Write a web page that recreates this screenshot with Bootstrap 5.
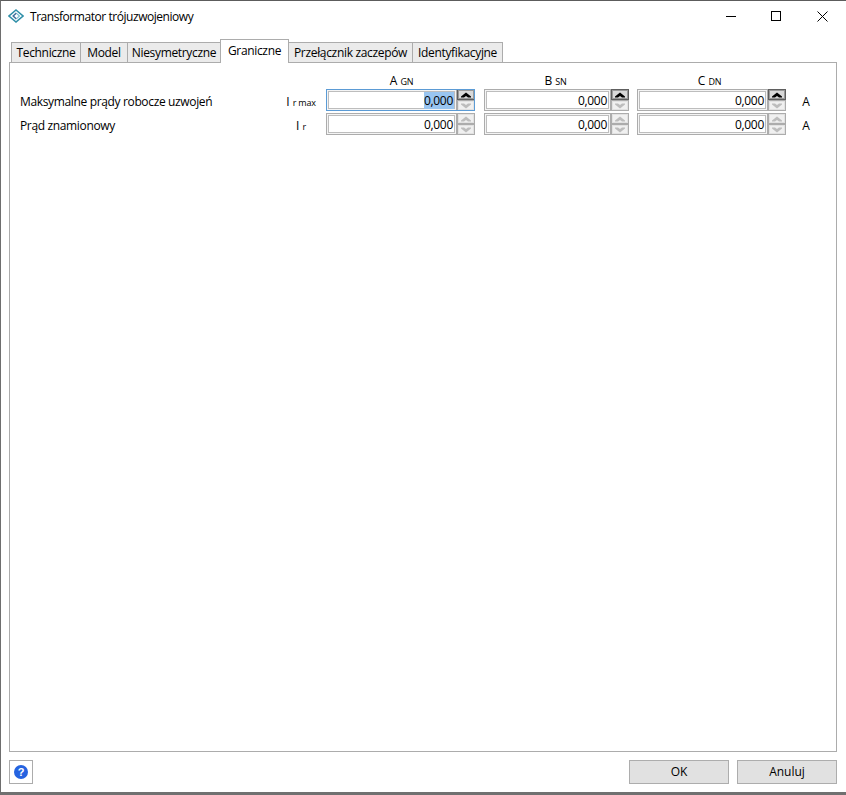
<!DOCTYPE html>
<html lang="pl">
<head>
<meta charset="utf-8">
<title>Transformator trójuzwojeniowy</title>
<link href="https://cdn.jsdelivr.net/npm/bootstrap@5.3.0/dist/css/bootstrap.min.css" rel="stylesheet">
<style>
html,body{margin:0;padding:0;background:#fff;}
body{font-family:"Open Sans","Liberation Sans",sans-serif;font-size:12px;color:#000;line-height:16px;overflow:hidden;}
.win{width:846px;height:795px;border-top:1px solid #5c5c5c;border-left:1px solid #6e6e6e;border-bottom:3px solid #707070;display:flex;flex-direction:column;background:#fff;}
.titlebar{height:38px;display:flex;align-items:flex-start;padding:7px 0 0 7px;gap:6px;flex:none;}
.titletxt{line-height:18px;letter-spacing:-.45px;}
.wctrls{margin-left:auto;display:flex;gap:0;margin-top:-7px;margin-right:1px;}
.wbtn{width:45px;height:30px;display:flex;align-items:center;justify-content:center;}
.wbtn.wmax{margin-right:2px;}
.tabstrip{flex:none;height:24px;margin:0 0 -1px 10px;display:flex;align-items:flex-end;position:relative;z-index:1;border:0;flex-wrap:nowrap;}
.tabi{height:21px;background:#ebebeb;border:1px solid #acacac;margin-right:-1px;text-align:center;line-height:19px;letter-spacing:-.33px;white-space:nowrap;box-sizing:border-box;}
.tabi.on{height:24px;background:#fff;line-height:21px;border-bottom:0;position:relative;z-index:1;}
.t1{width:70px}.t2{width:48px}.t3{width:94px}.t4{width:69px}.t5{width:125px}.t6{width:91px}
.pane{flex:none;width:828px;height:690px;margin-left:8px;border:1px solid #acacac;padding:10px 0 0 10px;background:#fff;}
.gridrows{display:grid;grid-template-columns:256px 50px 149px 154px 157px 40px;column-gap:0;row-gap:2px;}
.hd{height:14px;line-height:16px;text-align:center;}
.gb{margin-left:9px}.gc{margin-left:8px}
.hda{padding-left:2px}.hdb{padding-right:2px}.hdc{padding-right:4px}
.sub{font-size:9px;letter-spacing:-.2px;}
.lbl{line-height:26px;height:22px;letter-spacing:-.35px;white-space:nowrap;}
.sym{line-height:26px;height:22px;text-align:center;white-space:nowrap;}
.unit{line-height:26px;height:22px;text-align:center;}
.spin{height:22px;display:flex;align-items:stretch;}
.spinbox{flex:1 1 auto;min-width:0;border:1px solid #acacac;box-shadow:inset 0 0 0 1px #f4f4f4,inset 0 0 0 2px #bdbdbd;border-radius:0;padding:2px 3px 0 0;text-align:right;line-height:18px;font-size:12px;letter-spacing:-.3px;color:#000;background:#fff;min-height:0;height:22px;}
.spin.foc{outline:1px solid #5b9bd5;outline-offset:-1px;}
.selt{background:#99c5f0;display:inline-block;line-height:17px;padding-right:1px;margin-right:-1px;}
.spinbtns{flex:none;width:18px;display:flex;flex-direction:column;gap:0;}
.sb{flex:1;display:flex;align-items:center;justify-content:center;border:1px solid #acacac;box-shadow:inset 0 0 0 1px #e2e2e2;background:#f0f0f0;padding:0;height:11px;}
.sb.act{background:#d9d9d9;border-color:#5f5f5f;box-shadow:inset 0 0 0 1px #9a9a9a;}
.foot{flex:none;height:41px;display:flex;align-items:flex-start;padding:8px 9px 0 8px;}
.helpb{width:24px;height:24px;border:1px solid #acacac;background:#fff;padding:0;display:flex;align-items:center;justify-content:center;border-radius:0;}
.dlgb{width:100px;height:24px;padding:0;border:1px solid #adadad;border-radius:0;background:#e1e1e1;color:#000;font-size:12px;line-height:20px;}
.dlgb:hover{background:#e1e1e1;color:#000;border-color:#adadad;}
.gapb{margin-left:auto}
.ms8{margin-left:8px}
</style>
</head>
<body>
<div class="win">
  <div class="titlebar">
    <svg width="16" height="16" viewBox="0 0 16 16" fill="none"><path d="M8 2 15 8 8 14 1 8Z" stroke="#2f8fa8" stroke-width="1.6" fill="none"/><path d="M8.4 5 5.2 8 8.4 11" stroke="#3d6f9c" stroke-width="1.5"/><path d="M9 5.800 11.400 8 9 10.200" stroke="#7cc0d2" stroke-width="1.2"/></svg>
    <span class="titletxt">Transformator trójuzwojeniowy</span>
    <div class="wctrls">
      <div class="wbtn"><svg width="10" height="10" viewBox="0 0 10 10"><path d="M0 5.500H10" stroke="#000"/></svg></div>
      <div class="wbtn wmax"><svg width="10" height="10" viewBox="0 0 10 10"><rect x=".5" y=".5" width="9" height="9" fill="none" stroke="#000"/></svg></div>
      <div class="wbtn"><svg width="11" height="11" viewBox="0 0 11 11"><path d="M.5.5 10.500 10.500M10.500.5 .5 10.500" stroke="#000"/></svg></div>
    </div>
  </div>
  <div class="tabstrip nav">
    <div class="tabi t1">Techniczne</div>
    <div class="tabi t2">Model</div>
    <div class="tabi t3">Niesymetryczne</div>
    <div class="tabi on t4">Graniczne</div>
    <div class="tabi t5">Przełącznik zaczepów</div>
    <div class="tabi t6">Identyfikacyjne</div>
  </div>
  <div class="pane">
    <div class="gridrows">
      <div class="hd"></div><div class="hd"></div>
      <div class="hd hda">A <span class="sub">GN</span></div>
      <div class="hd gb hdb">B <span class="sub">SN</span></div>
      <div class="hd gc hdc">C <span class="sub">DN</span></div>
      <div class="hd"></div>

      <div class="lbl">Maksymalne prądy robocze uzwojeń</div>
      <div class="sym">I <span class="sub">r max</span></div>
      <div class="spin foc">
        <div class="spinbox form-control"><span class="selt">0,000</span></div>
        <div class="spinbtns">
          <div class="sb act"><svg width="10" height="6" viewBox="0 0 10 6"><path d="M5 .5 10 4.500V5.500H7L5 4 3 5.500H0V4.500Z" fill="#000"/></svg></div>
          <div class="sb"><svg width="10" height="6" viewBox="0 0 10 6"><path d="M0 .5H3L5 2 7 .5H10V1.500L5 5.500 0 1.500Z" fill="#bdbdbd"/></svg></div>
        </div>
      </div>
      <div class="spin gb">
        <div class="spinbox form-control">0,000</div>
        <div class="spinbtns">
          <div class="sb act"><svg width="10" height="6" viewBox="0 0 10 6"><path d="M5 .5 10 4.500V5.500H7L5 4 3 5.500H0V4.500Z" fill="#000"/></svg></div>
          <div class="sb"><svg width="10" height="6" viewBox="0 0 10 6"><path d="M0 .5H3L5 2 7 .5H10V1.500L5 5.500 0 1.500Z" fill="#bdbdbd"/></svg></div>
        </div>
      </div>
      <div class="spin gc">
        <div class="spinbox form-control">0,000</div>
        <div class="spinbtns">
          <div class="sb act"><svg width="10" height="6" viewBox="0 0 10 6"><path d="M5 .5 10 4.500V5.500H7L5 4 3 5.500H0V4.500Z" fill="#000"/></svg></div>
          <div class="sb"><svg width="10" height="6" viewBox="0 0 10 6"><path d="M0 .5H3L5 2 7 .5H10V1.500L5 5.500 0 1.500Z" fill="#bdbdbd"/></svg></div>
        </div>
      </div>
      <div class="unit">A</div>

      <div class="lbl">Prąd znamionowy</div>
      <div class="sym">I <span class="sub">r</span></div>
      <div class="spin">
        <div class="spinbox form-control">0,000</div>
        <div class="spinbtns">
          <div class="sb"><svg width="10" height="6" viewBox="0 0 10 6"><path d="M5 .5 10 4.500V5.500H7L5 4 3 5.500H0V4.500Z" fill="#bdbdbd"/></svg></div>
          <div class="sb"><svg width="10" height="6" viewBox="0 0 10 6"><path d="M0 .5H3L5 2 7 .5H10V1.500L5 5.500 0 1.500Z" fill="#bdbdbd"/></svg></div>
        </div>
      </div>
      <div class="spin gb">
        <div class="spinbox form-control">0,000</div>
        <div class="spinbtns">
          <div class="sb"><svg width="10" height="6" viewBox="0 0 10 6"><path d="M5 .5 10 4.500V5.500H7L5 4 3 5.500H0V4.500Z" fill="#bdbdbd"/></svg></div>
          <div class="sb"><svg width="10" height="6" viewBox="0 0 10 6"><path d="M0 .5H3L5 2 7 .5H10V1.500L5 5.500 0 1.500Z" fill="#bdbdbd"/></svg></div>
        </div>
      </div>
      <div class="spin gc">
        <div class="spinbox form-control">0,000</div>
        <div class="spinbtns">
          <div class="sb"><svg width="10" height="6" viewBox="0 0 10 6"><path d="M5 .5 10 4.500V5.500H7L5 4 3 5.500H0V4.500Z" fill="#bdbdbd"/></svg></div>
          <div class="sb"><svg width="10" height="6" viewBox="0 0 10 6"><path d="M0 .5H3L5 2 7 .5H10V1.500L5 5.500 0 1.500Z" fill="#bdbdbd"/></svg></div>
        </div>
      </div>
      <div class="unit">A</div>
    </div>
  </div>
  <div class="foot">
    <button class="helpb btn" type="button" aria-label="Pomoc"><svg width="16" height="16" viewBox="0 0 16 16"><circle cx="8" cy="8" r="7" fill="#2563e0"/><text x="8" y="12" text-anchor="middle" font-family="Liberation Sans, sans-serif" font-weight="700" font-size="11" fill="#fff">?</text></svg></button>
    <button class="dlgb btn gapb" type="button">OK</button>
    <button class="dlgb btn ms8" type="button">Anuluj</button>
  </div>
</div>
<script src="https://cdn.jsdelivr.net/npm/bootstrap@5.3.0/dist/js/bootstrap.bundle.min.js"></script>
</body>
</html>
